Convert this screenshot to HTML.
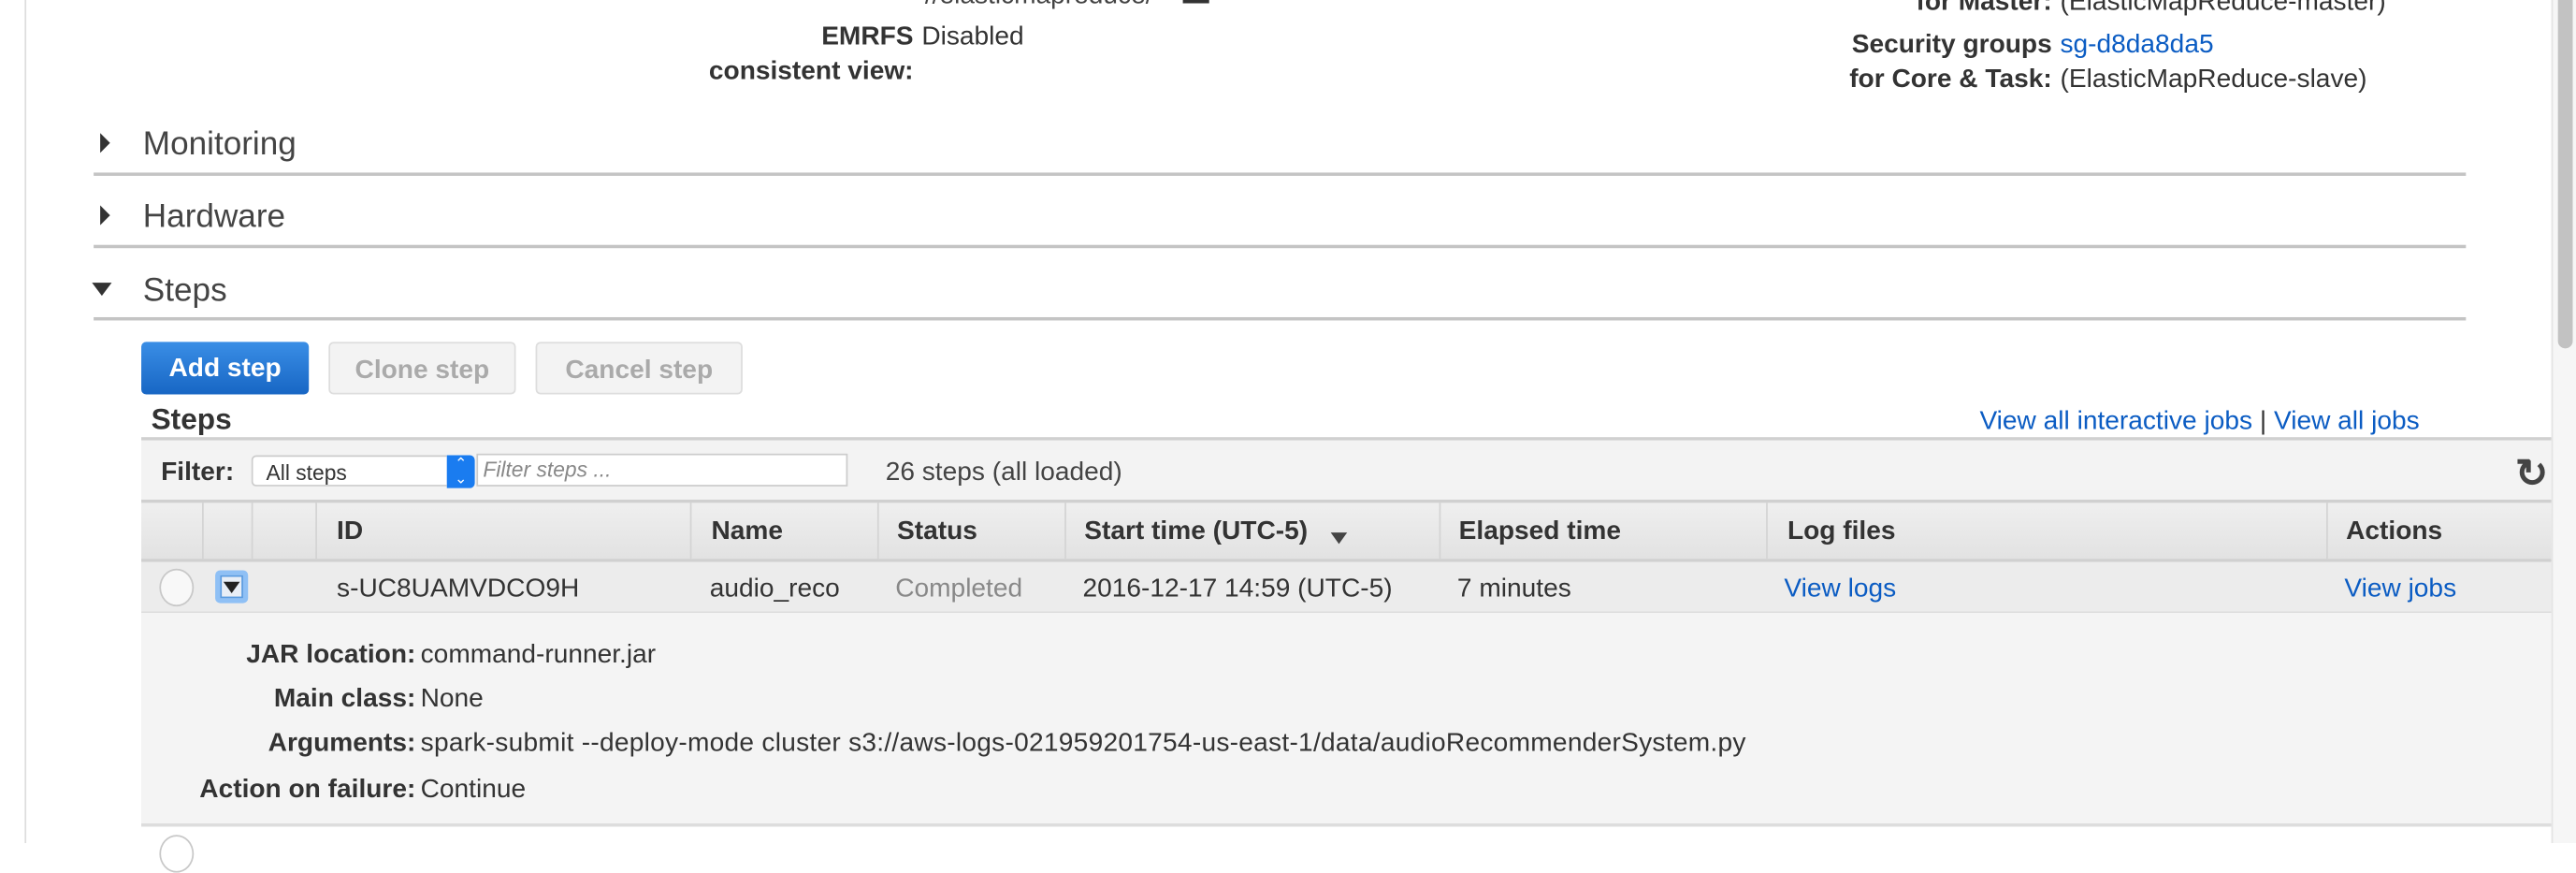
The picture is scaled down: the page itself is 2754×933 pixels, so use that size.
<!DOCTYPE html>
<html><head><style>
html,body{margin:0;padding:0;width:2754px;height:900px;overflow:hidden;background:#fff}
#w{position:absolute;left:0;top:0;width:1568px;height:513px;transform:scale(1.75638);transform-origin:0 0;font-family:"Liberation Sans",Arial,sans-serif;color:#333;font-size:16px}
.a{position:absolute;white-space:nowrap;line-height:22px}
.b{font-weight:bold}
.l{color:#0b5cc3}
.hl{position:absolute;left:57px;width:1444px;height:2px;background:#c4c4c4}
.sec{position:absolute;left:87px;font-size:20px;color:#444;line-height:26px}
.tri{position:absolute;width:0;height:0}
.btn{position:absolute;top:208px;height:30px;border-radius:3px;font-weight:bold;font-size:16px;text-align:center;line-height:33px}
.g{border:1px solid #ddd;background:#f3f3f3;color:#aaa}
.th{position:absolute;top:305px;height:35px;line-height:38px;font-weight:bold}
.sep{position:absolute;top:306px;height:34px;width:1px;background:#d4d4d4}
.dl{position:absolute;text-align:right;width:200px;font-weight:bold;line-height:22px}
</style></head><body><div id="w">
<div class="a" style="left:15px;top:0;width:1px;height:513px;background:#ddd"></div>
<div class="a" style="left:563px;top:-13px;color:#444">//elasticmapreduce/</div>
<div class="a" style="left:720px;top:-4px;width:16px;height:6px;background:#333"></div>
<div class="a b" style="right:1012px;top:12px">EMRFS</div>
<div class="a" style="left:561px;top:12px">Disabled</div>
<div class="a b" style="right:1012px;top:33px">consistent view:</div>
<div class="a b" style="right:319px;top:-9px">for Master:</div>
<div class="a" style="left:1254px;top:-9px">(ElasticMapReduce-master)</div>
<div class="a b" style="right:319px;top:17px">Security groups</div>
<div class="a l" style="left:1254px;top:17px">sg-d8da8da5</div>
<div class="a b" style="right:319px;top:38px">for Core &amp; Task:</div>
<div class="a" style="left:1254px;top:38px">(ElasticMapReduce-slave)</div>

<div class="tri" style="left:61px;top:81px;border-left:6px solid #333;border-top:6px solid transparent;border-bottom:6px solid transparent"></div>
<div class="sec" style="top:75px">Monitoring</div>
<div class="hl" style="top:105px"></div>
<div class="tri" style="left:61px;top:125px;border-left:6px solid #333;border-top:6px solid transparent;border-bottom:6px solid transparent"></div>
<div class="sec" style="top:119px">Hardware</div>
<div class="hl" style="top:149px"></div>
<div class="tri" style="left:56px;top:172px;border-top:8px solid #333;border-left:6px solid transparent;border-right:6px solid transparent"></div>
<div class="sec" style="top:164px">Steps</div>
<div class="hl" style="top:193px"></div>

<div class="btn" style="left:86px;width:102px;height:32px;background:linear-gradient(#3a8ee6,#1766c4);color:#fff;border:0">Add step</div>
<div class="btn g" style="left:200px;width:112px">Clone step</div>
<div class="btn g" style="left:326px;width:124px">Cancel step</div>

<div class="a b" style="left:92px;top:244px;font-size:18px">Steps</div>
<div class="a" style="left:1205px;top:246px"><span class="l">View all interactive jobs</span> <span style="color:#333">|</span> <span class="l">View all jobs</span></div>

<div class="a" style="left:86px;top:266px;width:1467px;height:2px;background:#d0d0d0"></div>
<div class="a" style="left:86px;top:268px;width:1467px;height:36px;background:#f3f3f3"></div>
<div class="a b" style="left:98px;top:277px">Filter:</div>
<div class="a" style="left:153px;top:277px;width:119px;height:19px;background:#fff;border:1px solid #ccc;border-right:0;border-radius:3px 0 0 3px;font-size:13px;line-height:19px;padding-left:8px;box-sizing:border-box">All steps</div>
<div class="a" style="left:272px;top:277px;width:17px;height:20px;background:#1a7cf0;border-radius:0 3px 3px 0;color:#fff;font-size:9px;line-height:9px;text-align:center;padding-top:1px;box-sizing:border-box">&#8963;<br>&#8964;</div>
<div class="a" style="left:290px;top:276px;width:226px;height:20px;background:#fff;border:1px solid #ccc;box-sizing:border-box;font-size:13px;font-style:italic;color:#888;line-height:18px;padding-left:3px">Filter steps ...</div>
<div class="a" style="left:539px;top:277px;color:#444">26 steps (all loaded)</div>
<div class="a b" style="left:1531px;top:278px;font-size:24px;color:#444">&#8635;</div>

<div class="a" style="left:86px;top:304px;width:1467px;height:2px;background:#d0d0d0"></div>
<div class="a" style="left:86px;top:306px;width:1467px;height:34px;background:linear-gradient(#efefef,#e2e2e2)"></div>
<div class="sep" style="left:123px"></div><div class="sep" style="left:153px"></div><div class="sep" style="left:192px"></div><div class="sep" style="left:420px"></div><div class="sep" style="left:534px"></div><div class="sep" style="left:648px"></div><div class="sep" style="left:876px"></div><div class="sep" style="left:1075px"></div><div class="sep" style="left:1416px"></div>
<div class="th" style="left:205px">ID</div>
<div class="th" style="left:433px">Name</div>
<div class="th" style="left:546px">Status</div>
<div class="th" style="left:660px">Start time (UTC-5)</div>
<div class="tri" style="left:810px;top:324px;border-top:7px solid #444;border-left:5px solid transparent;border-right:5px solid transparent"></div>
<div class="th" style="left:888px">Elapsed time</div>
<div class="th" style="left:1088px">Log files</div>
<div class="th" style="left:1428px">Actions</div>
<div class="a" style="left:86px;top:340px;width:1467px;height:2px;background:#d0d0d0"></div>

<div class="a" style="left:86px;top:342px;width:1467px;height:30px;background:#ececec"></div>
<div class="a" style="left:97px;top:346px;width:19px;height:21px;border:1px solid #c8c8c8;border-radius:50%;background:#f8f8f8"></div>
<div class="a" style="left:131px;top:347px;width:20px;height:20px;background:#8fc0f5;border-radius:3px"></div>
<div class="a" style="left:134px;top:350px;width:14px;height:14px;background:#e8eef6;border:1px solid #5a9be0;box-sizing:border-box"></div>
<div class="tri" style="left:136px;top:354px;border-top:7px solid #222;border-left:5px solid transparent;border-right:5px solid transparent"></div>
<div class="a" style="left:205px;top:348px">s-UC8UAMVDCO9H</div>
<div class="a" style="left:432px;top:348px">audio_reco</div>
<div class="a" style="left:545px;top:348px;color:#888">Completed</div>
<div class="a" style="left:659px;top:348px">2016-12-17 14:59 (UTC-5)</div>
<div class="a" style="left:887px;top:348px">7 minutes</div>
<div class="a l" style="left:1086px;top:348px">View logs</div>
<div class="a l" style="left:1427px;top:348px">View jobs</div>
<div class="a" style="left:86px;top:372px;width:1467px;height:1px;background:#ddd"></div>

<div class="a" style="left:86px;top:373px;width:1467px;height:128px;background:#f4f4f4"></div>
<div class="dl" style="left:53px;top:388px">JAR location:</div><div class="a" style="left:256px;top:388px">command-runner.jar</div>
<div class="dl" style="left:53px;top:415px">Main class:</div><div class="a" style="left:256px;top:415px">None</div>
<div class="dl" style="left:53px;top:442px">Arguments:</div><div class="a" style="left:256px;top:442px;letter-spacing:0.15px">spark-submit --deploy-mode cluster s3://aws-logs-021959201754-us-east-1/data/audioRecommenderSystem.py</div>
<div class="dl" style="left:53px;top:470px">Action on failure:</div><div class="a" style="left:256px;top:470px">Continue</div>
<div class="a" style="left:86px;top:501px;width:1467px;height:2px;background:#ddd"></div>
<div class="a" style="left:97px;top:508px;width:19px;height:21px;border:1px solid #c8c8c8;border-radius:50%"></div>

<div class="a" style="left:1553px;top:0;width:15px;height:513px;background:#f6f6f6;border-left:1px solid #e4e4e4"></div>
<div class="a" style="left:1557px;top:-10px;width:9px;height:222px;background:#c2c2c2;border-radius:5px"></div>
</div></body></html>
